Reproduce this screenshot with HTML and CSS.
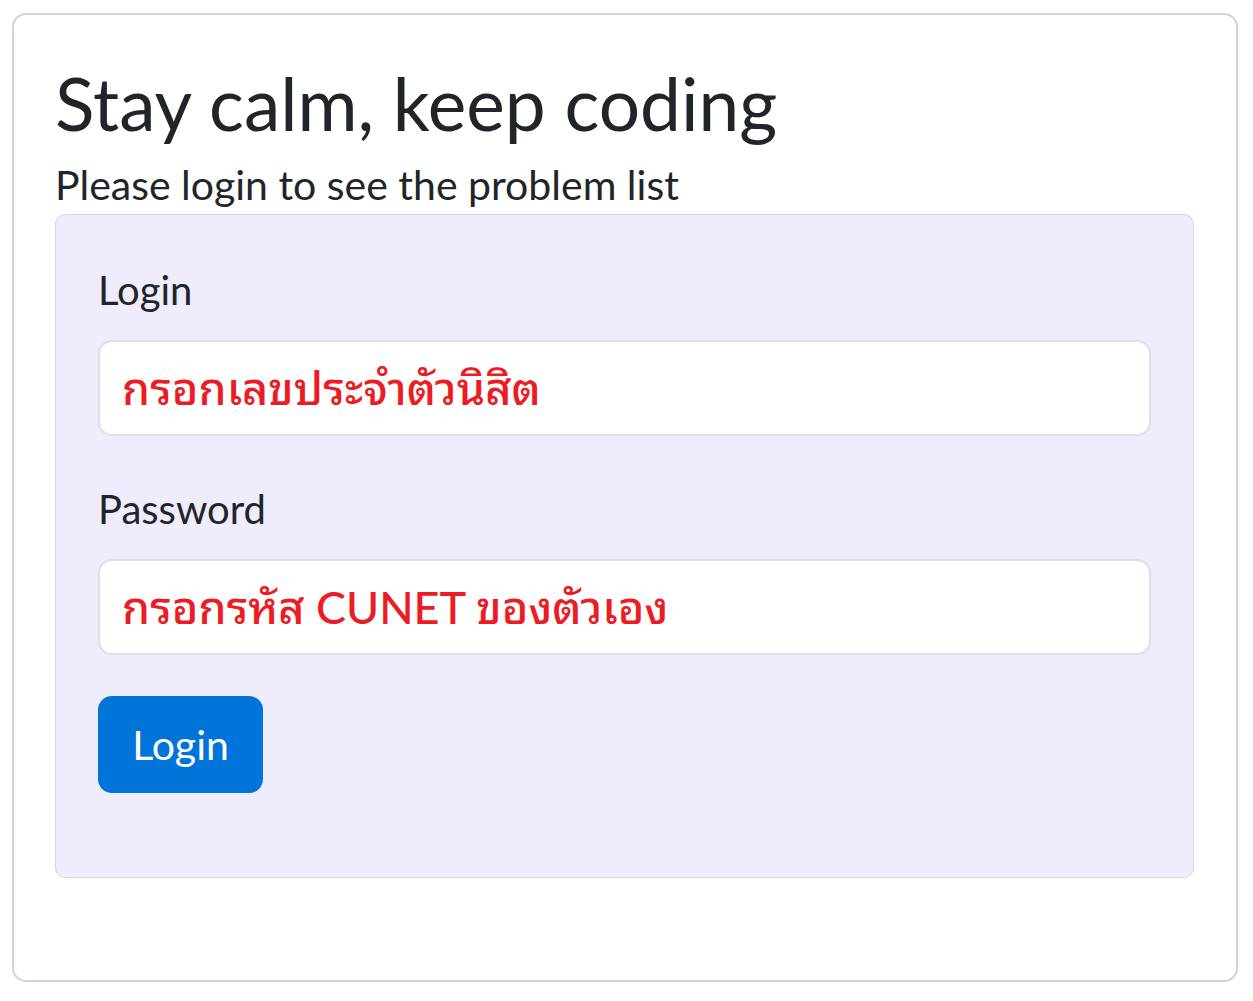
FILE: index.html
```html
<!DOCTYPE html>
<html lang="en">
<head>
<meta charset="utf-8">
<title>Stay calm, keep coding</title>
<link rel="stylesheet" href="styles.css">
</head>
<body>
<div class="page">
  <h1 class="title">Stay calm, keep coding</h1>
  <p class="lead">Please login to see the problem list</p>
  <form class="card">
    <label class="label" for="login">Login</label>
    <input class="field" id="login" type="text" placeholder="กรอกเลขประจำตัวนิสิต">
    <label class="label" for="password">Password</label>
    <input class="field" id="password" type="password" placeholder="กรอกรหัส CUNET ของตัวเอง">
    <button class="btn" type="button">Login</button>
  </form>
</div>
</body>
</html>
```
FILE: styles.css
```css
html, body {
  margin: 0;
  padding: 0;
  background: #ffffff;
}
body {
  font-family: "Lato", "Noto Sans Thai Looped", "Noto Serif Thai", "Loma", "Garuda", "Noto Sans Thai", sans-serif;
  color: #212529;
  padding: 13px 15px 19px 12px;
}
.page {
  box-sizing: border-box;
  height: 969px;
  border: 2px solid #d3d3d3;
  border-radius: 14px;
  padding: 46px 42px 0 41px;
}
.title {
  margin: 0;
  font-size: 73px;
  font-weight: 400;
  line-height: 84px;
}
.lead {
  margin: 14px 0 3px 0;
  font-size: 41px;
  line-height: 52px;
  font-weight: 400;
}
.card {
  box-sizing: border-box;
  height: 664px;
  background: #eeecfd;
  border: 1px solid #d6d6de;
  border-radius: 10px;
  padding: 48px 42px 0 42px;
  display: flex;
  flex-direction: column;
  align-items: flex-start;
}
.label {
  font-size: 40px;
  line-height: 54px;
  margin-bottom: 23px;
}
.field {
  box-sizing: border-box;
  width: 100%;
  height: 96px;
  border: 2px solid #dde0e6;
  border-radius: 14px;
  background: #ffffff;
  padding: 0 22px;
  font-family: "Lato", "Noto Sans Thai Looped", "Noto Serif Thai", "Loma", "Garuda", "Noto Sans Thai", sans-serif;
  font-size: 45px;
  font-weight: 500;
  margin-bottom: 46px;
  outline: none;
}
.field::placeholder {
  color: #ec1c24;
  opacity: 1;
}
#password {
  margin-bottom: 41px;
}
.btn {
  box-sizing: border-box;
  width: 165px;
  height: 97px;
  border: none;
  border-radius: 14px;
  background: #0074d9;
  color: #ffffff;
  font-family: inherit;
  font-size: 41px;
  padding: 0;
}
```
